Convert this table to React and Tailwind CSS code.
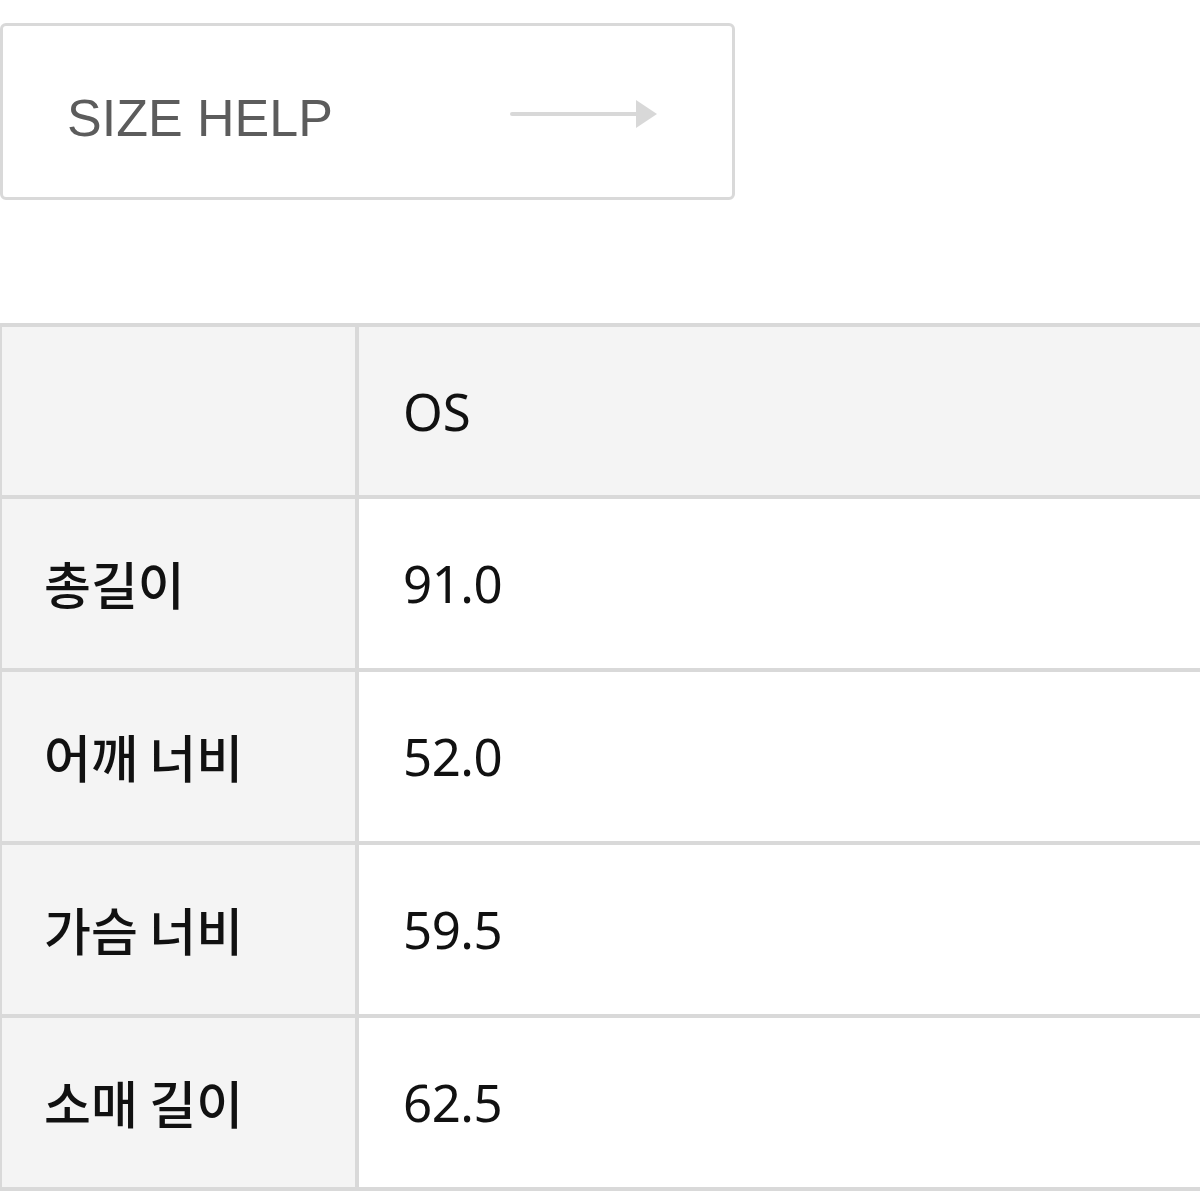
const rows = [
  { label: '총길이', value: '91.0' },
  { label: '어깨 너비', value: '52.0' },
  { label: '가슴 너비', value: '59.5' },
  { label: '소매 길이', value: '62.5' },
];

const labelFont = "font-['Noto_Sans_CJK_KR','Noto_Sans',sans-serif]";
const valueFont = "font-['Noto_Sans','Noto_Sans_CJK_KR',sans-serif]";

function Arrow() {
  return (
    <svg width="148" height="30" viewBox="0 0 148 30" className="mt-[4px] shrink-0">
      <rect x="0" y="13" width="128" height="4" rx="2" fill="#d8d8d8" />
      <polygon points="126,1 147,15 126,29" fill="#d8d8d8" />
    </svg>
  );
}

export default function App() {
  return (
    <div className="min-h-[1200px] w-[1200px] overflow-hidden bg-white">
      <div className="pt-[23px]">
        <div className="flex h-[177px] w-[735px] items-center justify-between rounded-[6px] border-[3px] border-[#d9d9d9] pl-[64px] pr-[74px]">
          <span className="pt-[12px] font-['Liberation_Sans',Arial,sans-serif] text-[52px] leading-none text-[#5c5c5c]">
            SIZE HELP
          </span>
          <Arrow />
        </div>
      </div>

      <div className="mt-[123px] grid w-[1220px] grid-cols-[353px_1fr] gap-[4px] bg-[#d9d9d9] py-[4px] pl-[2px]">
        <div className="h-[168px] bg-[#f4f4f4]" />
        <div className="flex h-[168px] items-center bg-[#f4f4f4] pl-[44px]">
          <span className={`${valueFont} text-[51px] leading-none text-[#111]`}>OS</span>
        </div>
        {rows.map((row) => (
          <Row key={row.label} {...row} />
        ))}
      </div>
    </div>
  );
}

function Row({ label, value }) {
  return (
    <>
      <div className="flex h-[169px] items-center bg-[#f4f4f4] pl-[42px]">
        <span className={`${labelFont} text-[51px] font-medium leading-none text-[#111]`}>{label}</span>
      </div>
      <div className="flex h-[169px] items-center bg-white pl-[44px]">
        <span className={`${valueFont} text-[51px] leading-none tracking-[-0.5px] text-[#111]`}>{value}</span>
      </div>
    </>
  );
}
